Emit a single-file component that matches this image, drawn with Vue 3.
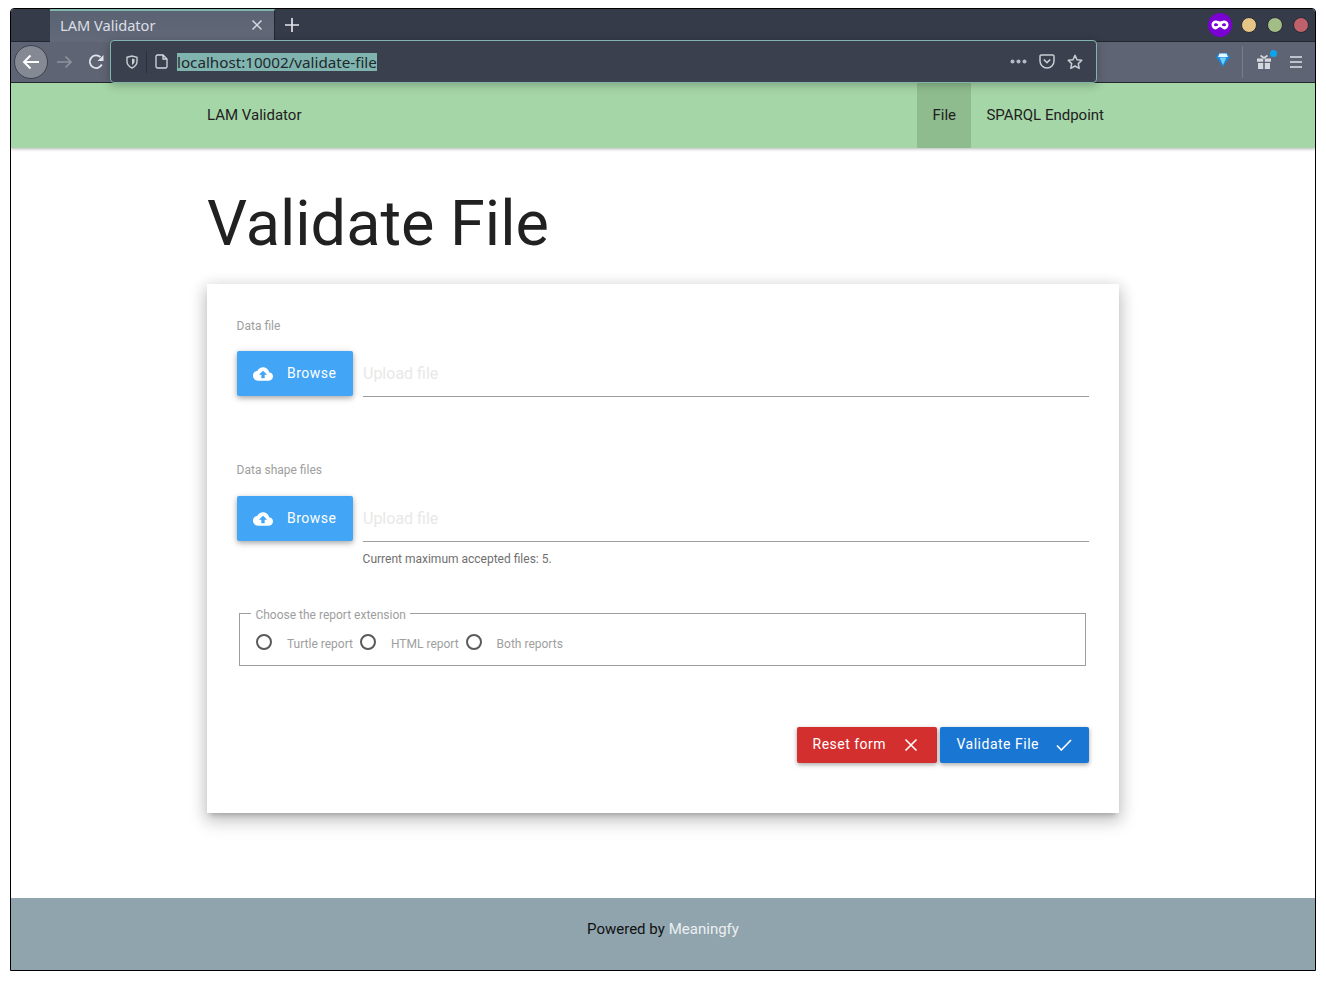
<script setup>
import { ref } from 'vue';

const reportTypes = ref(['Turtle report', 'HTML report', 'Both reports']);
</script>

<template>
  <div class="window">
    <div class="titlebar">
      <div class="tab">
        <span class="tab-title">LAM Validator</span>
        <svg class="tab-close" width="12" height="12" viewBox="0 0 12 12"><path d="M1.500 1.500l9 9M10.500 1.500l-9 9" stroke="#d5d8de" stroke-width="1.500" fill="none" /></svg>
      </div>
      <svg class="new-tab" width="16" height="16" viewBox="0 0 16 16"><path d="M8 1v14M1 8h14" stroke="#e3e5ea" stroke-width="1.700" fill="none" /></svg>
      <div class="title-right">
        <div class="mask">
          <svg width="18" height="10" viewBox="0 0 18 10"><path fill-rule="evenodd" fill="#fff" d="M5 .5c1.700 0 2.700 1 4 1s2.300-1 4-1c2.800 0 4.500 1.700 4.500 4.300S15.800 9.500 13.500 9.500C11.500 9.500 10.500 7 9 7S6.500 9.500 4.500 9.500C2.200 9.500.5 7.400.5 4.800S2.200.500 5 .500zM5 3.300C3.800 3.300 3 4 3 4.900s1 1.400 2 1.400 2.200-.5 2.200-1.200S6.200 3.300 5 3.300zM13 3.300c-1.200 0-2.200 1.100-2.200 1.800s1.200 1.200 2.200 1.200 2-.5 2-1.400-.8-1.600-2-1.600z" /></svg>
        </div>
        <span class="dot yellow"></span>
        <span class="dot green"></span>
        <span class="dot red"></span>
      </div>
    </div>

    <div class="toolbar">
      <div class="back-btn">
        <svg width="18" height="16" viewBox="0 0 18 16"><path d="M17 8H2M8.500 1.500L2 8l6.500 6.500" stroke="#fff" stroke-width="2" fill="none" /></svg>
      </div>
      <svg class="forward" width="16" height="14" viewBox="0 0 16 14"><path d="M0 7h14M8.500 1.500L14 7l-5.500 5.500" stroke="#8e939e" stroke-width="1.700" fill="none" /></svg>
      <svg class="reload" width="16" height="16" viewBox="0 0 16 16"><path d="M13.800 10.500A6.300 6.300 0 1 1 12.500 3.200" stroke="#e3e5ea" stroke-width="1.800" fill="none" /><path d="M9.500 7h6V1z" fill="#e3e5ea" /></svg>

      <div class="urlbar">
        <svg class="ic-shield" width="12" height="14" viewBox="0 0 12 14"><path d="M1 2.200L6 1l5 1.200v4.300c0 3-2.200 5.200-5 6.500-2.800-1.300-5-3.500-5-6.500z" stroke="#c9ccd3" stroke-width="1.400" fill="none" /><path d="M6 3.500l2.600.7v2.300c0 1.500-1.200 2.800-2.600 3.500z" fill="#c9ccd3" /></svg>
        <span class="url-sep"></span>
        <svg class="ic-page" width="13" height="15" viewBox="0 0 13 15"><path d="M1 2.500A1.500 1.500 0 0 1 2.500 1H8l4 4v7.500a1.500 1.500 0 0 1-1.500 1.500h-8A1.500 1.500 0 0 1 1 12.500zM8 1v4h4" stroke="#d5d8de" stroke-width="1.300" fill="none" /></svg>
        <span class="url-text">localhost:10002/validate-file</span>
        <div class="url-actions">
          <svg width="17" height="5" viewBox="0 0 17 5"><circle cx="2.500" cy="2.500" r="2" fill="#b6bac3" /><circle cx="8.500" cy="2.500" r="2" fill="#b6bac3" /><circle cx="14.500" cy="2.500" r="2" fill="#b6bac3" /></svg>
          <svg width="16" height="15" viewBox="0 0 16 15"><path d="M1 2.300A1.300 1.300 0 0 1 2.300 1h11.400A1.300 1.300 0 0 1 15 2.300V7a7 7 0 0 1-14 0z" stroke="#c9ccd3" stroke-width="1.500" fill="none" /><path d="M4.800 5.500L8 8.600l3.200-3.100" stroke="#c9ccd3" stroke-width="1.600" fill="none" /></svg>
          <svg width="16" height="16" viewBox="0 0 16 16"><path d="M8 1.300l2 4.400 4.800.6-3.500 3.300.9 4.800L8 12l-4.200 2.400.9-4.800L1.200 6.300 6 5.700z" stroke="#c9ccd3" stroke-width="1.500" stroke-linejoin="round" fill="none" /></svg>
        </div>
      </div>

      <div class="tools-right">
        <svg class="gem" width="14" height="16" viewBox="0 0 14 16"><path d="M3 1h8l3 4-7 10L0 5z" fill="#1c86d6" /><path d="M3.500 1.500h7L12 5H2z" fill="#e4f7ff" /><path d="M3.500 5.500h7L7 13z" fill="#6fd0fb" /></svg>
        <span class="tool-sep"></span>
        <div class="gift">
          <svg width="16" height="16" viewBox="0 0 16 16"><path d="M1 4.500h6.200v3.300H1zM8.800 4.500H15v3.300H8.800zM2 9h5.200v6H2zM8.800 9H14v6H8.800z" fill="#d5d8de" /><path d="M4.500 1.500L8 4l3.500-2.500" stroke="#d5d8de" stroke-width="1.600" fill="none" /></svg>
          <span class="gift-dot"></span>
        </div>
        <svg width="12" height="12" viewBox="0 0 12 12"><path d="M0 1h12M0 6h12M0 11h12" stroke="#dfe1e6" stroke-width="1.600" /></svg>
      </div>
    </div>

    <div class="page">
      <nav class="navbar">
        <div class="container nav-inner">
          <a class="brand">LAM Validator</a>
          <ul class="nav-links">
            <li class="active">File</li>
            <li>SPARQL Endpoint</li>
          </ul>
        </div>
      </nav>

      <main class="container main">
        <h1>Validate File</h1>
        <div class="card">
          <section class="file-field first">
            <label class="field-label">Data file</label>
            <div class="file-row">
              <button class="browse">
                <svg width="20" height="20" viewBox="0 0 24 24"><path fill="#fff" d="M19.350 10.040C18.670 6.590 15.640 4 12 4 9.110 4 6.600 5.640 5.350 8.040 2.340 8.360 0 10.910 0 14c0 3.310 2.690 6 6 6h13c2.760 0 5-2.240 5-5 0-2.640-2.050-4.780-4.650-4.960zM14 13v4h-4v-4H7l5-5 5 5h-3z" /></svg>
                <span>Browse</span>
              </button>
              <div class="upload-input">Upload file</div>
            </div>
          </section>

          <section class="file-field second">
            <label class="field-label">Data shape files</label>
            <div class="file-row">
              <button class="browse">
                <svg width="20" height="20" viewBox="0 0 24 24"><path fill="#fff" d="M19.350 10.040C18.670 6.590 15.640 4 12 4 9.110 4 6.600 5.640 5.350 8.040 2.340 8.360 0 10.910 0 14c0 3.310 2.690 6 6 6h13c2.760 0 5-2.240 5-5 0-2.640-2.050-4.780-4.650-4.960zM14 13v4h-4v-4H7l5-5 5 5h-3z" /></svg>
                <span>Browse</span>
              </button>
              <div class="upload-input">Upload file</div>
            </div>
            <p class="hint">Current maximum accepted files: 5.</p>
          </section>

          <fieldset class="report-group">
            <legend>Choose the report extension</legend>
            <div class="radios">
              <div v-for="r in reportTypes" :key="r" class="radio">
                <span class="circle"></span>
                <span class="radio-label">{{ r }}</span>
              </div>
            </div>
          </fieldset>

          <div class="actions">
            <button class="btn reset">
              <span>Reset form</span>
              <svg width="14" height="14" viewBox="0 0 14 14"><path d="M1.500 1.500l11 11M12.500 1.500l-11 11" stroke="#fff" stroke-width="1.600" fill="none" /></svg>
            </button>
            <button class="btn validate">
              <span>Validate File</span>
              <svg width="16" height="12" viewBox="0 0 16 12"><path d="M1 6.500L5.300 11 15 1" stroke="#fff" stroke-width="1.600" fill="none" /></svg>
            </button>
          </div>
        </div>
      </main>

      <footer class="footer">Powered by <span class="footer-link">Meaningfy</span></footer>
    </div>
  </div>
</template>

<style>
html, body {
  margin: 0;
  background: #fff;
}
</style>

<style scoped>
.window {
  box-sizing: border-box;
  width: 1306px;
  height: 963px;
  margin: 8px 0 0 10px;
  border: 1px solid #000;
  border-radius: 4px 4px 0 0;
  display: flex;
  flex-direction: column;
  overflow: hidden;
  position: relative;
  font-family: Roboto, sans-serif;
}

/* browser chrome */
.titlebar {
  height: 33px;
  box-sizing: border-box;
  background: #353b48;
  display: flex;
  align-items: stretch;
  padding-left: 39px;
  border-bottom: 1px solid #23272f;
  flex: none;
}
.tab {
  width: 225px;
  box-sizing: border-box;
  margin-bottom: -1px;
  background: linear-gradient(#5b6271, #626978);
  border-top: 2px solid #7fb5ae;
  border-right: 1px solid #23272f;
  display: flex;
  align-items: center;
  justify-content: space-between;
  padding: 0 11px 3px 10px;
  color: #e3e5ea;
  font: 14.6px "Noto Sans", sans-serif;
}
.tab-title {
  color: #dcdfe5;
}
.new-tab {
  align-self: center;
  margin-left: 9px;
}
.title-right {
  margin-left: auto;
  display: flex;
  align-items: center;
  gap: 10px;
  padding-right: 6px;
}
.mask {
  width: 24px;
  height: 24px;
  border-radius: 50%;
  background: #7a00d4;
  display: flex;
  align-items: center;
  justify-content: center;
  margin-right: -1px;
}
.dot {
  box-sizing: border-box;
  width: 16px;
  height: 16px;
  border-radius: 50%;
  border: 1px solid #262a33;
}
.yellow { background: #e5c586; }
.green { background: #a3bd87; }
.red { background: #bf616a; }

.toolbar {
  height: 41px;
  box-sizing: border-box;
  background: #5e6473;
  display: flex;
  align-items: center;
  border-bottom: 1px solid #23272f;
  flex: none;
  position: relative;
  padding-left: 3px;
}
.back-btn {
  width: 32px;
  height: 32px;
  border-radius: 50%;
  background: #858993;
  border: 1px solid #3c414d;
  display: flex;
  align-items: center;
  justify-content: center;
}
.forward {
  margin-left: 9px;
}
.reload {
  margin-left: 15px;
}
.urlbar {
  position: absolute;
  left: 99px;
  top: -2px;
  width: 987px;
  height: 43px;
  box-sizing: border-box;
  background: #3a404e;
  border: 1px solid #7fb5ae;
  border-radius: 4px;
  box-shadow: 0 2px 10px rgba(0, 0, 0, 0.25);
  display: flex;
  align-items: center;
  padding-left: 15px;
  z-index: 2;
}
.url-sep {
  width: 1px;
  height: 22px;
  background: #2b2f39;
  margin: 0 8px 0 8px;
}
.url-text {
  margin-left: 9px;
  background: #7fb5ae;
  color: #23272f;
  font: 15.2px/18px "Noto Sans", sans-serif;
}
.url-actions {
  margin-left: auto;
  display: flex;
  align-items: center;
  gap: 12px;
  padding-right: 13px;
}
.tools-right {
  margin-left: auto;
  display: flex;
  align-items: center;
  padding-right: 13px;
}
.gem {
  margin-bottom: 4px;
}
.tool-sep {
  width: 1px;
  height: 32px;
  background: #767c8a;
  margin: 0 13px 0 12px;
}
.gift {
  position: relative;
  display: flex;
  margin-right: 18px;
}
.gift-dot {
  position: absolute;
  top: -4px;
  right: -5px;
  width: 7px;
  height: 7px;
  border-radius: 50%;
  background: #0aa5f0;
}

/* page */
.page {
  flex: 1;
  display: flex;
  flex-direction: column;
  background: #fff;
  min-height: 0;
}
.container {
  width: 912px;
  margin: 0 auto;
}
.navbar {
  background: #a5d6a7;
  height: 65px;
  box-shadow: 0 1px 3px rgba(0, 0, 0, 0.3);
  flex: none;
}
.nav-inner {
  display: flex;
  justify-content: space-between;
  height: 100%;
}
.brand {
  line-height: 64px;
  font-size: 15px;
  color: #212121;
}
.nav-links {
  list-style: none;
  display: flex;
  margin: 0;
  padding: 0;
}
.nav-links li {
  padding: 0 15px;
  line-height: 64px;
  font-size: 15px;
  color: #212121;
}
.nav-links li.active {
  background: #8fbc8f;
  padding: 0 15.4px;
}

.main {
  flex: 1;
}
h1 {
  margin: 0;
  padding-top: 36px;
  font-size: 63px;
  font-weight: 400;
  line-height: 80px;
  color: #212121;
}
.card {
  box-sizing: border-box;
  height: 529px;
  margin-top: 20px;
  padding: 0 30px;
  background: #fff;
  box-shadow: 0 8px 17px 2px rgba(0, 0, 0, 0.14), 0 3px 14px 2px rgba(0, 0, 0, 0.12), 0 5px 5px -3px rgba(0, 0, 0, 0.2);
}
.file-field.first {
  padding-top: 35px;
}
.file-field.second {
  padding-top: 66px;
}
.field-label {
  display: block;
  font-size: 12px;
  line-height: 15px;
  color: #9e9e9e;
  margin-left: -0.4px;
}
.file-row {
  display: flex;
  margin-top: 18px;
}
.first .file-row {
  margin-top: 17px;
}
.browse {
  width: 116px;
  height: 45px;
  flex: none;
  border: 0;
  border-radius: 2px;
  background: #42a5f5;
  color: #fff;
  display: flex;
  align-items: center;
  padding: 0 0 0 15px;
  gap: 15px;
  font: 14px Roboto, sans-serif;
  letter-spacing: 0.5px;
  box-shadow: 0 2px 5px rgba(0, 0, 0, 0.26), 0 2px 8px rgba(0, 0, 0, 0.12);
}
.browse span,
.btn span {
  margin-top: -2px;
}
.browse svg {
  margin-left: 1px;
  margin-right: -1px;
}
.upload-input {
  flex: 1;
  margin-left: 10px;
  box-sizing: border-box;
  height: 46px;
  line-height: 46px;
  border-bottom: 1px solid #9e9e9e;
  font-size: 16px;
  color: #e8e8e8;
}
.hint {
  margin: 10px 0 0 125.6px;
  font-size: 12px;
  line-height: 15px;
  color: #6f6f6f;
}
.report-group {
  box-sizing: border-box;
  margin: 37px 3px 0 2px;
  height: 62px;
  padding: 0 16px;
  border: 1px solid #9e9e9e;
}
.report-group legend {
  padding: 4px 4px 0;
  margin-left: -4.6px;
  font-size: 12px;
  line-height: 14px;
  color: #9e9e9e;
}
.radios {
  display: flex;
  padding-top: 14px;
}
.radio {
  display: flex;
  align-items: center;
  margin-right: 7px;
}
.circle {
  box-sizing: border-box;
  width: 16px;
  height: 16px;
  border: 2px solid #5a5a5a;
  border-radius: 50%;
  margin-top: -4px;
}
.radio-label {
  margin-left: 15px;
  font-size: 12px;
  line-height: 16px;
  color: #9e9e9e;
}
.actions {
  display: flex;
  justify-content: flex-end;
  gap: 3px;
  margin-top: 61px;
}
.btn {
  height: 36px;
  border: 0;
  border-radius: 2px;
  color: #fff;
  display: flex;
  align-items: center;
  font: 14px Roboto, sans-serif;
  letter-spacing: 0.5px;
  box-shadow: 0 2px 5px rgba(0, 0, 0, 0.26), 0 1px 4px rgba(0, 0, 0, 0.12);
}
.reset {
  width: 140px;
  background: #d32f2f;
  padding: 0 19px 0 15.5px;
  justify-content: space-between;
}
.validate {
  width: 149px;
  background: #1976d2;
  padding: 0 17px 0 16.5px;
  justify-content: space-between;
}
.footer {
  height: 72px;
  box-sizing: border-box;
  padding-bottom: 10px;
  flex: none;
  background: #90a4ae;
  display: flex;
  align-items: center;
  justify-content: center;
  gap: 4px;
  font-size: 15px;
  color: #111;
}
.footer-link {
  color: #eceff1;
}
</style>
